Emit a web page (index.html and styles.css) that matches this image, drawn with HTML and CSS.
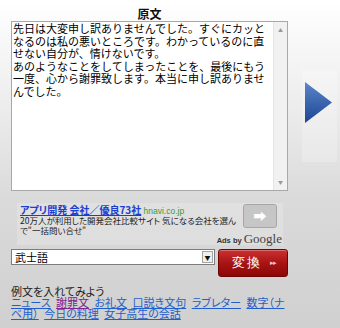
FILE: index.html
```html
<!DOCTYPE html>
<html lang="ja">
<head>
  <meta charset="UTF-8">
  <title>変換</title>
  <link rel="stylesheet" href="styles.css">
</head>
<body>

<div class="main">
  <div class="left">
    <h2 class="label">原文</h2>
    <div class="source">
      <textarea class="source-text" wrap="off" readonly>先日は大変申し訳ありませんでした。すぐにカッと
なるのは私の悪いところです。わかっているのに直
せない自分が、情けないです。
あのようなことをしてしまったことを、最後にもう
一度、心から謝罪致します。本当に申し訳ありませ
んでした。</textarea>
      <div class="scrollbar"><span>▲</span><span>▼</span></div>
    </div>

    <div class="ad">
      <div class="ad-text">
        <div class="ad-head"><a href="#" class="ad-title">アプリ開発 会社／優良73社</a> <span class="ad-url">hnavi.co.jp</span></div>
        <div class="ad-desc">20万人が利用した開発会社比較サイト 気になる会社を選ん</div>
        <div class="ad-desc">で"一括問い合せ"</div>
      </div>
      <a href="#" class="ad-go">➡</a>
      <div class="ads-by">Ads by <span class="google">Google</span></div>
    </div>

    <div class="controls">
      <div class="select">
        <select>
          <option>武士語</option>
        </select>
        <span class="select-btn">▼</span>
      </div>
      <button class="convert-btn"><span class="convert-label">変換</span><span class="convert-arrows">▸▸</span></button>
    </div>
  </div>

  <div class="arrow-col">
    <svg width="27" height="41" viewBox="0 0 27 41">
      <defs>
        <linearGradient id="arrowGrad" x1="0" y1="0" x2="0" y2="1">
          <stop offset="0" stop-color="#5a86cc"/>
          <stop offset="1" stop-color="#1c4690"/>
        </linearGradient>
      </defs>
      <polygon points="0,0 27,20.5 0,41" fill="url(#arrowGrad)"/>
    </svg>
  </div>
</div>

<div class="samples">
  <div class="samples-label">例文を入れてみよう</div>
  <a href="#">ニュース</a> <a href="#" class="visited">謝罪文</a> <a href="#">お礼文</a> <a href="#">口説き文句</a> <a href="#">ラブレター</a> <a href="#">数字（ナベ用）</a> <a href="#">今日の料理</a> <a href="#">女子高生の会話</a>
</div>

</body>
</html>
```

FILE: styles.css
```css
body { margin: 0; width: 340px; height: 328px; overflow: hidden; padding-left: 11px; box-sizing: border-box; font-family: "Noto Sans CJK JP", sans-serif; color: #111; background: linear-gradient(#ffffff 0, #ececec 110px, #dadada 200px, #d0d0d0 328px); }
.main { display: flex; }
.left { width: 277px; }
.label { margin: 0; padding-top: 6px; font-size: 12px; line-height: 15px; font-weight: bold; text-align: center; }

.source { display: flex; height: 170px; box-sizing: border-box; border: 1px solid #a8a8a8; background: #fff; }
.source-text { flex: 1; margin: 0; padding: 0 0 0 1px; border: 0; outline: none; resize: none; overflow: hidden; background: transparent; color: #000; font: 11px/12.6px "Noto Sans CJK JP", sans-serif; }
.scrollbar { width: 13px; display: flex; flex-direction: column; justify-content: space-between; align-items: center; padding: 4px 0 5px; background: #f1f1f1; border-left: 1px solid #e4e4e4; font-size: 5px; color: #9a9a9a; }

.ad { display: grid; grid-template-columns: 1fr 34px; column-gap: 3px; margin: 12px 5px 0 6px; padding: 1px 6px 1px 3px; background: rgba(255, 255, 255, 0.18); }
.ad-text { font-feature-settings: "palt"; }
.ad-head { height: 12px; font-size: 10px; line-height: 12px; white-space: nowrap; }
.ad-title { font-weight: bold; color: #1a3fd0; }
.ad-url { font-family: "Liberation Sans", sans-serif; font-size: 8.5px; color: #3a9a3a; }
.ad-desc { height: 9.5px; font-size: 8.5px; line-height: 9.5px; color: #222; white-space: nowrap; }
.ad-go { height: 24px; box-sizing: border-box; border: 1px solid #a6a6a6; border-radius: 3px; background: #c6c6c6; color: #fff; font-size: 13px; line-height: 21px; text-align: center; text-decoration: none; }
.ads-by { grid-column: 1 / 3; justify-self: end; height: 11px; margin: -2px -5px 0 0; font-family: "Liberation Sans", sans-serif; font-size: 7.5px; font-weight: bold; color: #333; line-height: 11px; }
.google { font-family: "Liberation Serif", serif; font-size: 13px; font-weight: normal; color: #444; }

.controls { display: flex; gap: 3px; margin-top: 4px; align-items: flex-start; }
.select { display: flex; width: 204px; height: 16px; box-sizing: border-box; border: 1px solid #7d7d7d; background: #fff; }
.select select { flex: 1; appearance: none; -webkit-appearance: none; border: 0; outline: none; background: transparent; padding: 0 3px; height: 14px; font: 11px/14px "Noto Sans CJK JP", sans-serif; color: #000; }
.select-btn { width: 11px; margin: 1px 1px 1px 0; box-sizing: border-box; border: 1px solid #a4a4a4; background: #efefef; font-size: 6px; color: #111; display: flex; align-items: center; justify-content: center; }
.convert-btn { width: 70px; height: 28px; padding: 0 0 0 13px; display: flex; align-items: center; border: 1px solid #6e0404; border-radius: 3px; background: linear-gradient(#cc3030, #a81414 50%, #8c0707); box-shadow: inset 0 1px 0 rgba(255, 255, 255, 0.3); color: #fff; cursor: pointer; }
.convert-label { font-size: 13px; font-weight: 500; letter-spacing: 2px; }
.convert-arrows { margin-left: 8px; font-size: 7px; color: #f4c6c6; letter-spacing: -1px; }

.arrow-col { width: 32px; height: 80px; margin: 70px 0 0 14px; padding: 12px 0 0 3px; background: rgba(255, 255, 255, 0.22); }

.samples { width: 277px; margin-top: 9px; font-size: 11px; line-height: 11.2px; font-feature-settings: "palt"; color: #222; }
.samples a { color: #1f5fcc; margin-right: 3px; }
.samples a.visited { color: #82208e; }
```
